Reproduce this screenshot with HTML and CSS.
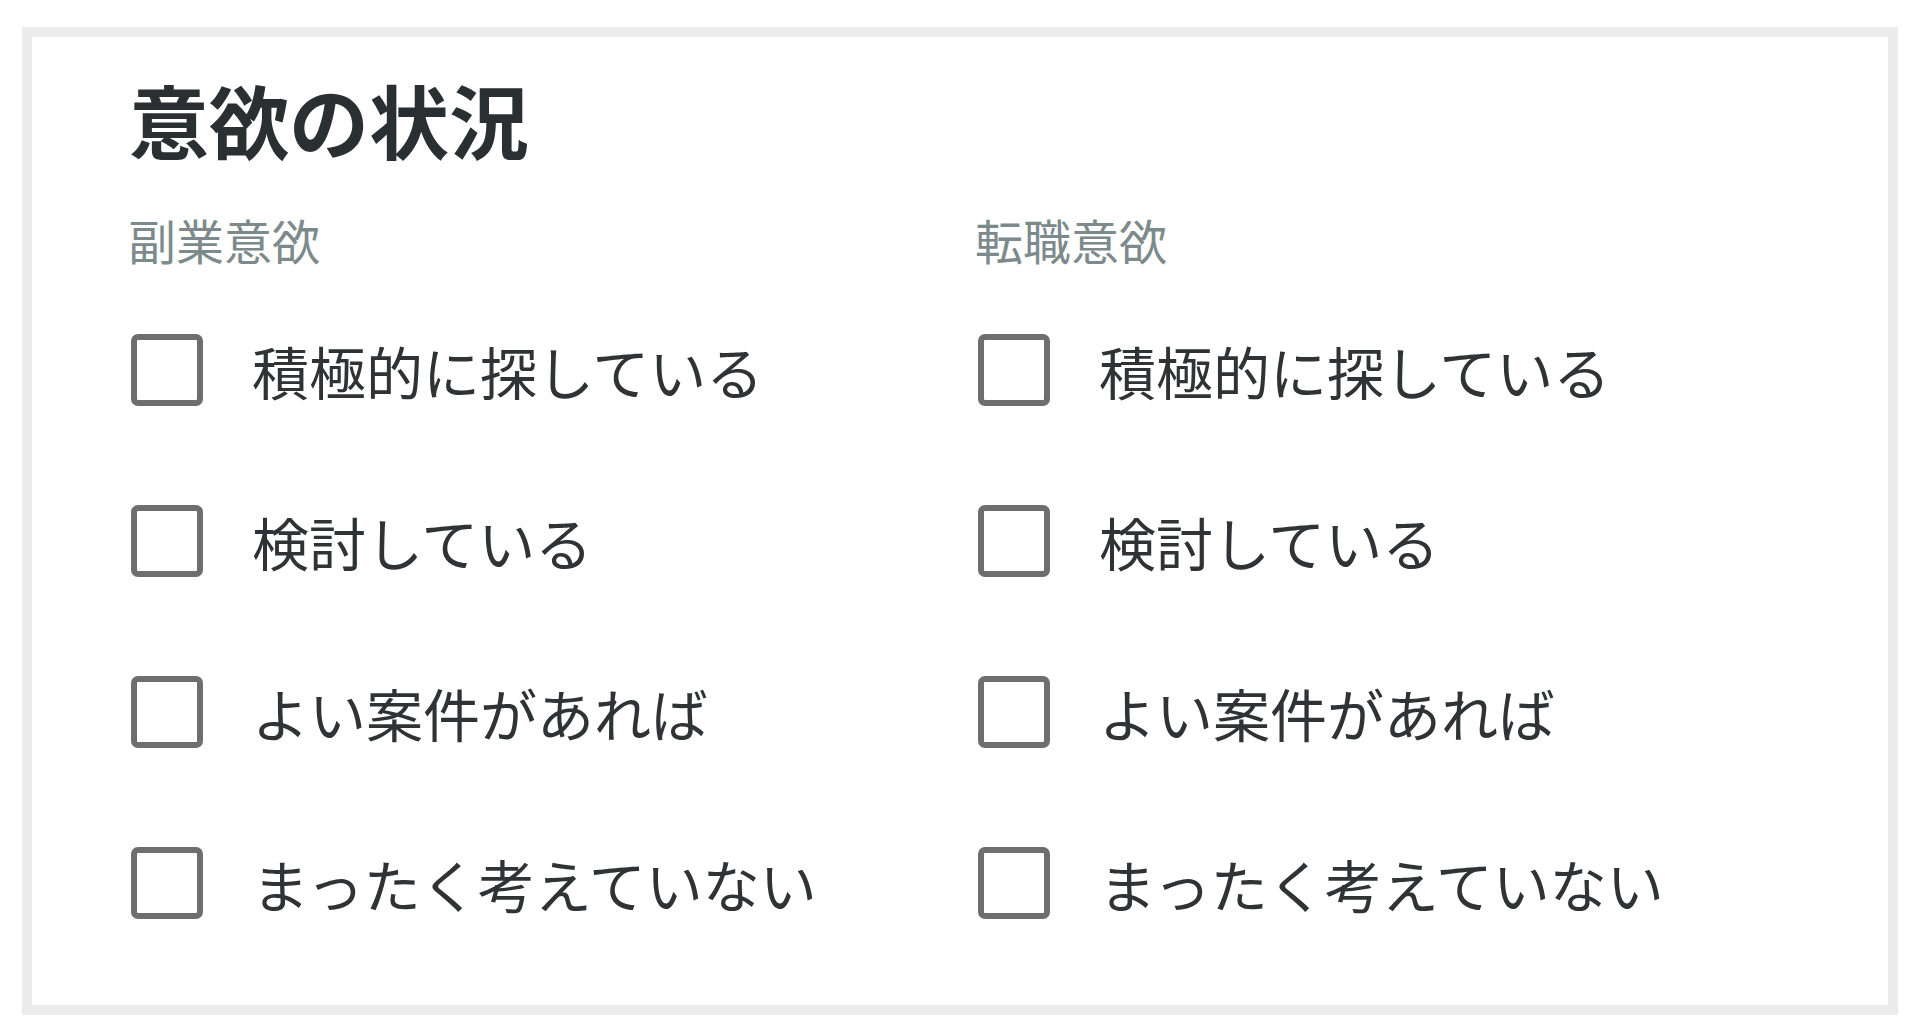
FILE: index.html
```html
<!DOCTYPE html>
<html lang="ja">
<head>
    <meta charset="UTF-8">
    <meta name="viewport" content="width=device-width, initial-scale=1.0">
    <title>意欲の状況</title>
    <link rel="stylesheet" href="styles.css">
</head>
<body>
    <section class="card">
        <h1 class="card-title">意欲の状況</h1>

        <div class="columns">
            <div class="group">
                <div class="group-title">副業意欲</div>
                <label class="option"><input type="checkbox" name="side"><span>積極的に探している</span></label>
                <label class="option"><input type="checkbox" name="side"><span>検討している</span></label>
                <label class="option"><input type="checkbox" name="side"><span>よい案件があれば</span></label>
                <label class="option"><input type="checkbox" name="side"><span>まったく考えていない</span></label>
            </div>

            <div class="group">
                <div class="group-title">転職意欲</div>
                <label class="option"><input type="checkbox" name="change"><span>積極的に探している</span></label>
                <label class="option"><input type="checkbox" name="change"><span>検討している</span></label>
                <label class="option"><input type="checkbox" name="change"><span>よい案件があれば</span></label>
                <label class="option"><input type="checkbox" name="change"><span>まったく考えていない</span></label>
            </div>
        </div>
    </section>
</body>
</html>
```

FILE: styles.css
```css
body {
    margin: 0; /* 去掉默认边距 */
    background: #fff;
    font-family: "Noto Sans CJK JP", "Noto Sans", sans-serif;
    color: #333;
}

.card {
    margin: 27px 22px 17px 22px;
    border: 10px solid #ececec; /* 粗边框 */
    background: #fff;
    padding: 41px 96px 86px 97px;
}

.card-title {
    margin: 0 0 57px 0;
    font-size: 80px;
    line-height: 1;
    font-weight: bold;
    color: #2a2f31;
}

.columns {
    display: grid;
    grid-template-columns: 847px 1fr;
}

.group {
    display: flex;
    flex-direction: column;
    gap: 99px; /* 选项之间的间距 */
}

.group-title {
    font-size: 48px;
    line-height: 1;
    color: #7d8a8b;
    margin-left: -1px;
    margin-bottom: -28px;
}

.option {
    display: flex;
    align-items: center;
    gap: 49px;
    font-size: 57px;
    line-height: 1;
    color: #2f3335;
    cursor: pointer;
}

.option input {
    appearance: none;
    -webkit-appearance: none;
    margin: 0 0 0 2px;
    width: 72px;
    height: 72px;
    box-sizing: border-box;
    border: 6px solid #6e6e6e;
    border-radius: 7px;
    background: #fff;
    flex-shrink: 0;
}

.option input:checked {
    background: #6e6e6e;
}
```
